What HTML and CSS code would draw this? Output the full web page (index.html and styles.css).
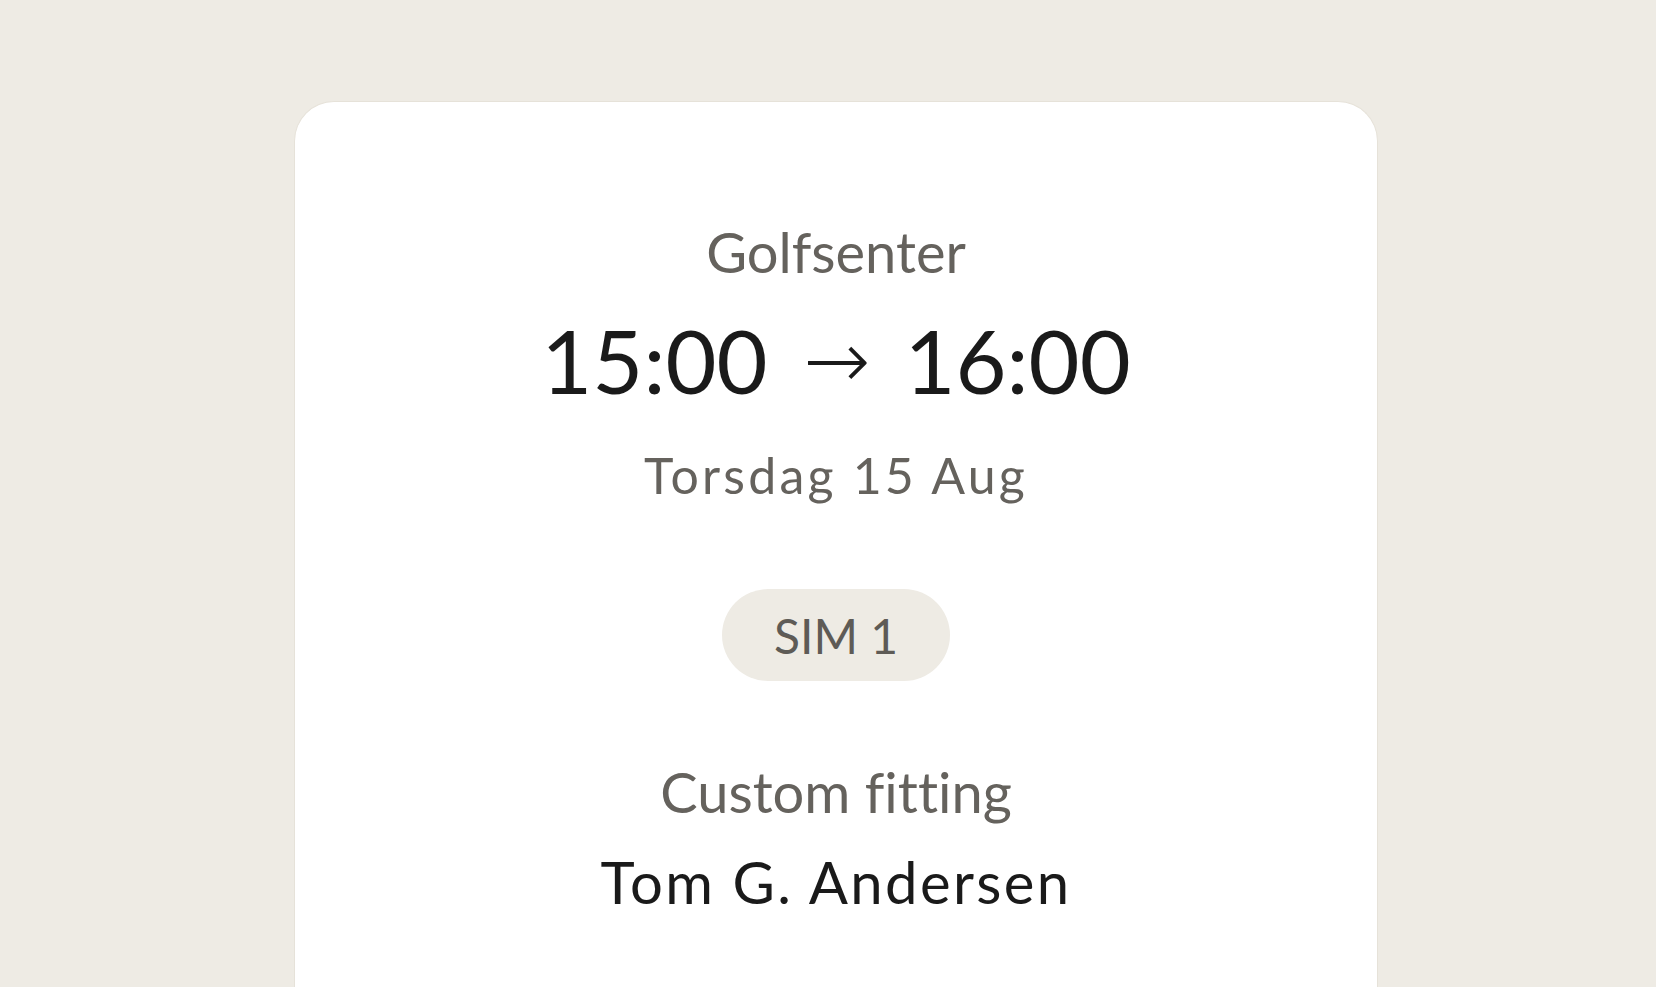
FILE: index.html
```html
<!DOCTYPE html>
<html lang="no">
<head>
<meta charset="utf-8">
<title>Booking</title>
<link rel="stylesheet" href="styles.css">
</head>
<body>
<main class="page">
  <section class="card">
    <div class="venue">Golfsenter</div>
    <div class="time"><span class="t">15:00</span><span class="arrow">→</span><span class="t">16:00</span></div>
    <div class="date">Torsdag 15 Aug</div>
    <div class="pill">SIM 1</div>
    <div class="service">Custom fitting</div>
    <div class="person">Tom G. Andersen</div>
  </section>
</main>
</body>
</html>
```
FILE: styles.css
```css
html, body {
  margin: 0;
  padding: 0;
  background: #eeebe4;
  height: 100%;
  overflow: hidden;
}
body {
  font-family: Lato, "Noto Sans", sans-serif;
  font-variant-ligatures: none;
}
.page {
  padding: 101px 278px 0 294px;
}
.card {
  background: #ffffff;
  border: 1px solid #e6e2d9;
  border-bottom: none;
  border-radius: 40px 40px 0 0;
  height: 1000px;
  box-sizing: border-box;
  padding-top: 116px;
  display: flex;
  flex-direction: column;
  align-items: center;
  text-align: center;
}
.venue {
  font-size: 56px;
  line-height: 1.2;
  color: #65625d;
}
.time {
  margin-top: 23px;
  font-size: 88px;
  line-height: 1.2;
  color: #1a1a1a;
  display: flex;
  align-items: baseline;
}
.arrow {
  font-family: "DejaVu Sans", sans-serif;
  font-weight: 200;
  font-size: 80px;
  margin: 0 34px 0 36px;
  position: relative;
  top: -6px;
}
.date {
  margin-top: 30px;
  font-size: 50px;
  line-height: 1.2;
  letter-spacing: 3.2px;
  color: #65625d;
}
.pill {
  margin-top: 84px;
  height: 92px;
  width: 228px;
  border-radius: 46px;
  background: #eeebe4;
  color: #5e5b56;
  font-size: 48px;
  display: flex;
  align-items: center;
  justify-content: center;
}
.service {
  margin-top: 77px;
  font-size: 56px;
  line-height: 1.2;
  color: #65625d;
}
.person {
  margin-top: 22px;
  font-size: 58px;
  line-height: 1.2;
  letter-spacing: 2.4px;
  color: #1a1a1a;
}
```
